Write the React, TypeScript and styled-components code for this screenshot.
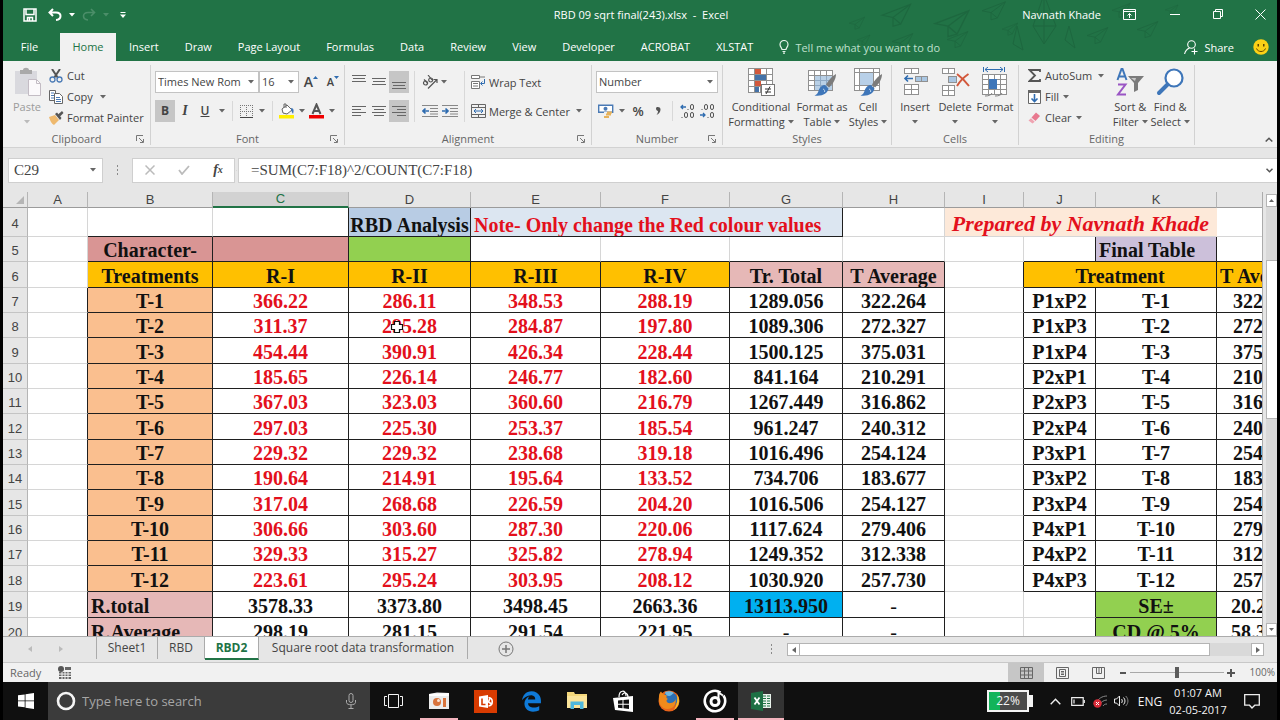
import React from 'react';
import styled, { createGlobalStyle, css } from 'styled-components';
import { FaEdgeLegacy } from 'react-icons/fa';

const UI = '"Open Sans", "Noto Sans", sans-serif';
const GREEN = '#217346';
const LINE = '#1f1f1f';
const SOFT = '#d6d6d6';

const Global = createGlobalStyle`
  * { box-sizing: border-box; }
  html, body { margin: 0; background: #000; }
  button, input, select { font: inherit; color: inherit; margin: 0; }
  button { border: 0; padding: 0; background: none; }
  svg { display: block; flex: none; }
`;

/* ---------- frame ---------- */
const Window = styled.div`
  display: flex;
  flex-direction: column;
  height: 100vh;
  padding: 0 3px;
  overflow: hidden;
  font-family: ${UI};
  font-size: 12px;
  line-height: 15px;
  color: #444;
`;

const Header = styled.header`
  position: relative;
  flex: none;
  background: ${GREEN};
  color: #fff;
`;

const Doodles = styled.svg`
  position: absolute;
  top: 0;
  right: 80px;
`;

const TitleBar = styled.div`
  position: relative;
  display: grid;
  grid-template-columns: 1fr auto 1fr;
  align-items: center;
  height: 33px;
  padding: 0 0 4px 2px;
  font-size: 11px;
`;

const QuickAccess = styled.div`
  display: flex;
  align-items: center;
  padding-left: 14px;
`;

const WindowControls = styled.div`
  display: flex;
  align-items: center;
  justify-content: flex-end;
  white-space: nowrap;
`;

const Tool = styled.button<{ $w?: number; $on?: boolean; $h?: number }>`
  display: flex;
  flex: none;
  align-items: center;
  justify-content: center;
  width: ${(p) => p.$w ?? 20}px;
  height: ${(p) => p.$h ?? 22}px;
  background: ${(p) => (p.$on ? '#c6c6c6' : 'transparent')};
`;

const TabBar = styled.nav`
  position: relative;
  display: flex;
  height: 28px;
  align-items: stretch;
  font-size: 11px;
`;

const Tab = styled.button<{ $active?: boolean; $first?: boolean }>`
  padding: 0 13px;
  white-space: nowrap;
  line-height: 28px;
  ${(p) => p.$first && css`width: 57px; padding: 0 4px 0 0;`}
  ${(p) => p.$active && css`background: #f1f1f1; color: ${GREEN}; width: 56px; padding: 0;`}
`;

const TellMe = styled.label`
  display: flex;
  align-items: center;
  gap: 6px;
  flex: 1;
  min-width: 0;
  padding-left: 13px;
  input {
    width: 200px;
    border: 0;
    padding: 0;
    outline: 0;
    background: transparent;
    font-size: 11px;
    &::placeholder { color: #bfe0cd; opacity: 1; }
  }
`;

const Share = styled.button`
  display: flex;
  align-items: center;
  gap: 6px;
  margin-right: 11px;
`;

/* ---------- ribbon ---------- */
const Ribbon = styled.section`
  display: flex;
  flex: none;
  padding: 4px 0 2px;
  height: 87px;
  background: #f1f1f1;
  border-bottom: 1px solid #d2d2d2;
  font-size: 11px;
`;

const GroupBox = styled.div<{ $w: number }>`
  display: flex;
  flex-direction: column;
  flex: none;
  width: ${(p) => p.$w}px;
  border-right: 1px solid #d2d2d2;
`;

const GroupBody = styled.div<{ $pad: number; $drop?: boolean }>`
  display: flex;
  flex: 1;
  align-items: flex-start;
  padding: ${(p) => (p.$drop ? 6 : 0)}px 0 0 ${(p) => p.$pad}px;
`;

const GroupFoot = styled.div`
  display: grid;
  grid-template-columns: 14px 1fr 14px;
  align-items: center;
  height: 12px;
  line-height: 12px;
  color: #666;
  text-align: center;
  & > span { grid-column: 2; }
`;

const RibbonEnd = styled.div`
  display: flex;
  flex: 1;
  align-items: flex-end;
  justify-content: flex-end;
`;

const Stack = styled.div<{ $gap?: number }>`
  display: flex;
  flex-direction: column;
  gap: ${(p) => p.$gap ?? 0}px;
`;

const Line = styled.div`
  display: flex;
  align-items: center;
`;

const Rule = styled.div<{ $m: number; $h?: number }>`
  flex: none;
  width: 1px;
  height: ${(p) => p.$h ?? 20}px;
  margin: 0 ${(p) => p.$m}px;
  background: #d8d8d8;
`;

const SmallButton = styled.button<{ $h?: number }>`
  display: flex;
  align-items: center;
  height: ${(p) => p.$h ?? 21}px;
  white-space: nowrap;
  & > i { display: flex; justify-content: center; width: 18px; margin-right: 2px; }
  & > span { padding-right: 4px; }
`;

const CaretBox = styled.span<{ $w: number }>`
  display: flex;
  flex: none;
  justify-content: center;
  width: ${(p) => p.$w}px;
`;

const BigButton = styled.button<{ $w: number; $faded?: boolean }>`
  display: flex;
  flex-direction: column;
  align-items: center;
  width: ${(p) => p.$w}px;
  padding-top: 2px;
  line-height: 15px;
  white-space: nowrap;
  color: ${(p) => (p.$faded ? '#9b9b9b' : 'inherit')};
  & > svg { margin-bottom: 2px; }
  & > span { display: flex; align-items: center; gap: 3px; height: 15px; }
`;

const Combo = styled.label<{ $w: number }>`
  display: grid;
  width: ${(p) => p.$w}px;
  height: 22px;
  align-items: center;
  border: 1px solid #c3c3c3;
  background: #fff;
  & > * { grid-area: 1 / 1; }
  select {
    appearance: none;
    width: 100%;
    height: 20px;
    padding: 0 17px 0 2px;
    border: 0;
    outline: 0;
    background: transparent;
    line-height: 20px;
    text-overflow: clip;
  }
  svg { justify-self: end; margin-right: 4px; pointer-events: none; }
`;

const Letter = styled.span<{ $size?: number; $kind?: 'b' | 'i' | 'u' }>`
  font-size: ${(p) => p.$size ?? 13}px;
  line-height: 16px;
  font-weight: ${(p) => (p.$kind === 'i' ? 400 : 600)};
  ${(p) => p.$kind === 'b' && css`font-weight: 700;`}
  ${(p) => p.$kind === 'i' && css`font-family: "Liberation Serif", serif; font-weight: 700; font-style: italic;`}
  ${(p) => p.$kind === 'u' && css`text-decoration: underline;`}
`;

/* ---------- formula bar ---------- */
const FormulaBar = styled.section`
  display: flex;
  flex: none;
  height: 44px;
  align-items: center;
  padding-left: 5px;
  background: #e6e6e6;
`;

const Field = styled.div<{ $w?: number; $grow?: boolean }>`
  display: flex;
  align-items: center;
  flex: ${(p) => (p.$grow ? '1' : 'none')};
  min-width: 0;
  width: ${(p) => (p.$w ? `${p.$w}px` : 'auto')};
  height: 25px;
  padding: 0 6px 0 5px;
  border: 1px solid #cfcfcf;
  ${(p) => p.$grow && css`border-right: 0; padding: 0 4px 0 12px;`}
  background: #fff;
  input {
    flex: 1;
    min-width: 0;
    border: 0;
    padding: 0;
    outline: 0;
    background: transparent;
    font-family: "Liberation Serif", serif;
    font-size: 15px;
    line-height: 20px;
    color: #444;
  }
`;

const Dots = styled.div<{ $m: number }>`
  flex: none;
  width: 1px;
  height: 11px;
  margin: 0 ${(p) => p.$m}px;
  background: repeating-linear-gradient(#8a8a8a 0 2px, transparent 2px 4px);
`;

/* ---------- sheet ---------- */
const SheetArea = styled.main`
  display: flex;
  flex: 1 1 0;
  min-height: 0;
  background: #e6e6e6;
  border-bottom: 1px solid #ababab;
`;

const Viewport = styled.div`
  flex: 1;
  min-width: 0;
  overflow: hidden;
  border-right: 1px solid #ababab;
`;

const Grid = styled.table`
  width: 1312px;
  table-layout: fixed;
  border-collapse: separate;
  border-spacing: 0;
  background: #fff;
`;

const ColHead = styled.th<{ $active?: boolean }>`
  height: 16px;
  padding: 0;
  border-right: 1px solid #b5b5b5;
  border-bottom: 1px solid #9b9b9b;
  background: #e6e6e6;
  font: 13px/15px "Liberation Sans", sans-serif;
  ${(p) => p.$active && css`background: #d2d2d2; color: ${GREEN}; border-bottom: 2px solid ${GREEN}; line-height: 14px;`}
  & > svg { margin-left: auto; margin-right: 3px; }
`;

const RowHead = styled.th`
  padding: 4px 0 0;
  border-right: 1px solid #b5b5b5;
  border-bottom: 1px solid #c4c4c4;
  background: #e6e6e6;
  font: 13px/18px "Liberation Sans", sans-serif;
`;

const Cell = styled.td<{
  $bg?: string; $red?: boolean; $left?: boolean; $r?: boolean; $b?: boolean; $script?: boolean; $thin?: boolean; $indent?: number;
}>`
  position: relative;
  padding: 0 0 0 ${(p) => p.$indent ?? (p.$left ? 3 : 0)}px;
  overflow: hidden;
  white-space: nowrap;
  vertical-align: bottom;
  border-right: 1px solid ${(p) => (p.$r ? LINE : p.$bg ?? SOFT)};
  border-bottom: 1px solid ${(p) => (p.$b ? LINE : SOFT)};
  background: ${(p) => p.$bg ?? '#fff'};
  color: ${(p) => (p.$red ? '#e3101c' : '#111')};
  text-align: ${(p) => (p.$left ? 'left' : 'center')};
  font: bold 20px/22px "Liberation Serif", serif;
  ${(p) => p.$script && css`font-size: 22px; line-height: 24px; font-style: italic;`}
  ${(p) => p.$thin && css`font-weight: 400;`}
`;

const Row = styled.tr<{ $h: number }>`
  height: ${(p) => p.$h}px;
`;

const Pointer = styled.svg`
  position: absolute;
  left: 41px;
  top: 7px;
`;

const VScroll = styled.div`
  display: flex;
  flex-direction: column;
  width: 14px;
  padding: 2px 0 0 3px;
  & > button { width: 11px; }
`;

const ScrollButton = styled.button`
  display: flex;
  flex: none;
  align-items: center;
  justify-content: center;
  width: 13px;
  height: 13px;
  border: 1px solid #b4b4b4;
  background: #fff;
`;

const VTrack = styled.div`
  flex: 1;
  padding-top: 53px;
  background: #d9d9d9;
  & > div { height: 159px; border: 1px solid #b4b4b4; border-right: 0; background: #fff; }
`;

/* ---------- sheet tabs and status ---------- */
const SheetTabs = styled.nav`
  display: flex;
  flex: none;
  height: 26px;
  align-items: flex-start;
  background: #e6e6e6;
  border-bottom: 1px solid #c8c8c8;
`;

const SheetTab = styled.button<{ $w: number; $active?: boolean }>`
  width: ${(p) => p.$w}px;
  height: 22px;
  border-right: 1px solid #ababab;
  white-space: nowrap;
  line-height: 22px;
  ${(p) => p.$active && css`
    height: 23px;
    background: #fff;
    color: ${GREEN};
    font-weight: 700;
    border-bottom: 2px solid ${GREEN};
  `}
`;

const Push = styled.div`
  flex: 1;
`;

const HScroll = styled.div`
  display: flex;
  align-items: center;
  width: 477px;
  margin: 6px 13px 0 0;
`;

const HTrack = styled.div`
  flex: 1;
  height: 13px;
  background: #d9d9d9;
  & > div { width: 91%; height: 13px; border: 1px solid #b4b4b4; border-left: 0; background: #fff; }
`;

const Status = styled.footer`
  display: flex;
  flex: none;
  height: 19px;
  align-items: center;
  padding-left: 7px;
  background: #f1f1f1;
  color: #666;
  font-size: 11px;
`;

const Zoom = styled.input`
  appearance: none;
  width: 94px;
  height: 12px;
  background: linear-gradient(#a8a8a8, #a8a8a8) center / 100% 1px no-repeat;
  &::-webkit-slider-thumb { appearance: none; width: 4px; height: 11px; background: #5c5c5c; }
`;

const ZoomValue = styled.span`
  width: 39px;
  padding-right: 2px;
  text-align: right;
  font-size: 10px;
`;

/* ---------- taskbar ---------- */
const Taskbar = styled.footer`
  display: flex;
  flex: none;
  height: 38px;
  align-items: stretch;
  background: #101010;
  color: #f4f4f4;
`;

const Search = styled.label`
  display: flex;
  align-items: center;
  gap: 6px;
  flex: 0 1 322px;
  padding: 0 14px 0 8px;
  background: #3b3b3b;
  input {
    flex: 1;
    min-width: 0;
    border: 0;
    padding: 0;
    outline: 0;
    background: transparent;
    font-size: 13px;
    &::placeholder { color: #a6a6a6; opacity: 1; }
  }
`;

const App46 = styled.button<{ $state?: 'open' | 'active' }>`
  display: flex;
  position: relative;
  align-items: center;
  justify-content: center;
  width: 46px;
  background: ${(p) => (p.$state === 'active' ? '#333' : 'transparent')};
  &::after {
    content: '';
    position: absolute;
    bottom: 0;
    width: ${(p) => (p.$state === 'active' ? 46 : 38)}px;
    height: 2px;
    background: ${(p) => (p.$state ? '#f3b3bd' : 'transparent')};
  }
`;

const Tray = styled.div`
  display: flex;
  align-items: center;
  margin-left: auto;
`;

const Battery = styled.div`
  display: flex;
  align-items: center;
  margin-right: 10px;
  & > b {
    width: 42px;
    height: 22px;
    border: 2px solid #f4f4f4;
    background: linear-gradient(90deg, #12b45a 11px, #4b4b4b 11px);
    font-size: 12px;
    font-weight: 400;
    line-height: 18px;
    text-align: center;
  }
  & > i { width: 4px; height: 12px; background: #f4f4f4; }
`;

const Clock = styled.time`
  width: 58px;
  text-align: center;
  font-size: 11px;
  line-height: 17px;
`;

/* ---------- icons ---------- */
const Caret = ({ color = '#666' }: { color?: string }) => (
  <svg width="6" height="4" viewBox="0 0 6 4"><path d="M0 0h6L3 3.5z" fill={color} /></svg>
);
const Launcher = () => (
  <svg width="8" height="8" viewBox="0 0 8 8" fill="none" stroke="#777"><path d="M.5 6V.5H7M3 3l4 4M7.500 4v3.500H4" /></svg>
);
const Bars = ({ y, x = [0, 0, 0], w = [14, 14, 14] }: { y: number[]; x?: number[]; w?: number[] }) => (
  <svg width="14" height="16" viewBox="0 0 14 16">
    {y.map((v, i) => {
      const k = y.length === 4 ? i % 2 : i % 3;
      return <rect key={v} x={x[k]} y={v} width={w[k]} height="1" fill="#666" />;
    })}
  </svg>
);
const GridIcon = ({ x, y, c, r, s = 6, h = 5, fill = '#fff' }: { x: number; y: number; c: number; r: number; s?: number; h?: number; fill?: string }) => (
  <g fill={fill} stroke="#909090">
    {Array.from({ length: c * r }, (_, i) => (
      <rect key={i} x={x + (i % c) * s + 0.5} y={y + Math.floor(i / c) * h + 0.5} width={s} height={h} />
    ))}
  </g>
);
const Brush = () => (
  <g>
    <path d="M29 7c-4 2-8 7-10 10.500l3 3C26 17 29 12 29 7z" fill="#7b7b7b" />
    <path d="M18 18l3.500 3.500c-1 5-6 8-14 7 3-1 3.500-3 4.500-6 1-2.500 3.500-4.500 6-4.500z" fill="#3e76b9" />
    <path d="M16 22c1.500.500 2 1.500 1.500 3" stroke="#bcd4ec" fill="none" />
  </g>
);

const ConditionalIcon = () => (
  <svg width="30" height="30" viewBox="0 0 30 30">
    <GridIcon x={2} y={1} c={4} r={4} s={6} h={6} />
    <path d="M9 2h6v5H9zM9 14h6v5H9z" fill="#d2583b" />
    <path d="M9 8h11v5H9zM9 20h4v5H9z" fill="#4472a8" />
    <rect x="15.500" y="17.500" width="13" height="11" fill="#fff" stroke="#777" />
    <path d="M19 22h6M19 25h6M24 19.500l-4 7.500" stroke="#333" fill="none" />
  </svg>
);
const TableIcon = () => (
  <svg width="30" height="30" viewBox="0 0 30 30">
    <GridIcon x={1} y={3} c={4} r={4} s={6} h={5} />
    <path d="M8 9h17v14H8z" fill="#a8c4e0" opacity=".8" />
    <path d="M13.500 9v14M19.500 9v14M8 13.500h17M8 18.500h17" stroke="#8fa9c4" />
    <Brush />
  </svg>
);
const StylesIcon = () => (
  <svg width="30" height="30" viewBox="0 0 30 30">
    <GridIcon x={1} y={1} c={1} r={1} s={25} h={22} />
    <path d="M6.500 1v22M1 5.500h25M1 18.500h25M20.500 1v22" stroke="#909090" />
    <path d="M7 6h13v12H7z" fill="#b8d0e8" />
    <Brush />
  </svg>
);
const InsertIcon = () => (
  <svg width="30" height="30" viewBox="0 0 30 30">
    <GridIcon x={4} y={1} c={2} r={1} s={7} h={5} />
    <GridIcon x={4} y={17} c={2} r={2} s={7} h={5} />
    <GridIcon x={15} y={9} c={2} r={1} s={6} h={5} fill="#a9c6e2" />
    <path d="M13 11.500H5M8 8.500l-3 3 3 3" stroke="#2f6cb0" strokeWidth="1.600" fill="none" />
  </svg>
);
const DeleteIcon = () => (
  <svg width="30" height="30" viewBox="0 0 30 30">
    <GridIcon x={2} y={1} c={2} r={1} s={6} h={5} />
    <GridIcon x={2} y={18} c={2} r={2} s={6} h={5} />
    <GridIcon x={8} y={9} c={1} r={1} s={8} h={6} fill="#a9c6e2" />
    <path d="M17 7c4 3 8 7 12 12M28.500 7C24 10 20 14 17 19" stroke="#d2583b" strokeWidth="2" fill="none" />
  </svg>
);
const FormatIcon = () => (
  <svg width="30" height="30" viewBox="0 0 30 30">
    <path d="M3.500 0v5M24.500 0v5M5 2.500h18M8 0L5 2.500 8 5M20 0l3 2.500L20 5" stroke="#2f6cb0" fill="none" />
    <GridIcon x={2} y={7} c={4} r={4} s={6} h={5} />
    <path d="M9 12h8v10H9z" fill="#3e76b9" />
    <path d="M5 29c4 0 6-1 7-3M15 29c4 0 6-1 7-3" stroke="#808080" fill="none" />
  </svg>
);
const SortIcon = () => (
  <svg width="30" height="30" viewBox="0 0 30 30">
    <path d="M2.500 13L6.500 2h1l4 11M4 9.500h6" stroke="#3e76b9" strokeWidth="2" fill="none" />
    <path d="M3 17.500h7.500L3 27.500h8" stroke="#9a55c4" strokeWidth="2" fill="none" />
    <path d="M13 9h16l-6 7v7l-4 2v-9z" fill="#7b7b7b" />
    <path d="M16 11h5l-1 3z" fill="#c9c9c9" />
  </svg>
);
const FindIcon = () => (
  <svg width="30" height="30" viewBox="0 0 30 30" fill="none" stroke="#3e76b9">
    <circle cx="19" cy="11" r="8.500" strokeWidth="2.200" fill="#fff" />
    <path d="M12.500 17.500L4 26" strokeWidth="4" strokeLinecap="round" />
  </svg>
);
const PasteIcon = () => (
  <svg width="30" height="30" viewBox="0 0 30 30">
    <path d="M3 4h22v23H3z" fill="#d9d9de" />
    <path d="M8 3h3c0-3 6-3 6 0h3v4H8z" fill="#a9a9a9" />
    <path d="M16.500 12.500h8l4 4v12h-12z" fill="#fbf9fb" stroke="#c3bcc4" />
    <path d="M24.500 12.500v4h4" fill="none" stroke="#c3bcc4" />
  </svg>
);
const CutIcon = () => (
  <svg width="14" height="14" viewBox="0 0 14 14" fill="none">
    <path d="M3 0l6 9M11 0L5 9" stroke="#555" strokeWidth="2" />
    <circle cx="3.500" cy="10.500" r="2.500" stroke="#4a7ab5" strokeWidth="1.300" /><circle cx="10.500" cy="10.500" r="2.500" stroke="#4a7ab5" strokeWidth="1.300" />
  </svg>
);
const CopyIcon = () => (
  <svg width="14" height="14" viewBox="0 0 14 14" fill="#fff" stroke="#666">
    <path d="M.500.500h6v10h-6z" /><path d="M2 3h3M2 5.500h3M2 8h3" stroke="#4a7ab5" />
    <path d="M5.500 3.500h5l3 3v7h-8z" /><path d="M7 7.500h4M7 9.500h5M7 11.500h5" stroke="#4a7ab5" />
  </svg>
);
const PainterIcon = () => (
  <svg width="15" height="14" viewBox="0 0 15 14">
    <path d="M0 6l6-2 4 5-5 5C3 13 1 10 0 6z" fill="#eeb96e" />
    <path d="M6 3l2-1.500L12.500 7 11 9z" fill="#555" /><path d="M9 3.500L13 0l1.500 2L11 5.500z" fill="#555" />
  </svg>
);

const Logo = () => (
  <svg width="16" height="16" viewBox="0 0 16 16" fill="#fff"><path d="M0 2.300l6.700-.9v6H0zM7.500 1.300L16 0v7.400H7.500zM0 8.300h6.700v6L0 13.500zM7.500 8.300H16V16l-8.500-1.300z" /></svg>
);
const paperPlane = 'M0 12L26 2l-9 18-7-6zM26 2L10 14M10 14v8l7-2';

/* ---------- sheet data ---------- */
const columns: [string, number][] = [
  ['A', 60], ['B', 125], ['C', 136], ['D', 122], ['E', 130], ['F', 129], ['G', 113], ['H', 102],
  ['I', 79], ['J', 72], ['K', 121], ['L', 98],
];
const treatments: string[][] = [
  ['366.22', '286.11', '348.53', '288.19', '1289.056', '322.264', 'P1xP2'],
  ['311.37', '295.28', '284.87', '197.80', '1089.306', '272.327', 'P1xP3'],
  ['454.44', '390.91', '426.34', '228.44', '1500.125', '375.031', 'P1xP4'],
  ['185.65', '226.14', '246.77', '182.60', '841.164', '210.291', 'P2xP1'],
  ['367.03', '323.03', '360.60', '216.79', '1267.449', '316.862', 'P2xP3'],
  ['297.03', '225.30', '253.37', '185.54', '961.247', '240.312', 'P2xP4'],
  ['229.32', '229.32', '238.68', '319.18', '1016.496', '254.124', 'P3xP1'],
  ['190.64', '214.91', '195.64', '133.52', '734.706', '183.677', 'P3xP2'],
  ['317.04', '268.68', '226.59', '204.20', '1016.506', '254.127', 'P3xP4'],
  ['306.66', '303.60', '287.30', '220.06', '1117.624', '279.406', 'P4xP1'],
  ['329.33', '315.27', '325.82', '278.94', '1249.352', '312.338', 'P4xP2'],
  ['223.61', '295.24', '303.95', '208.12', '1030.920', '257.730', 'P4xP3'],
];
const summaries = [
  { n: 19, name: 'R.total', v: ['3578.33', '3373.80', '3498.45', '2663.36'], total: '13113.950', key: 'SE±', out: '20.2' },
  { n: 20, name: 'R.Average', v: ['298.19', '281.15', '291.54', '221.95'], total: '-', key: 'CD @ 5%', out: '58.3' },
];
const gold = '#ffc000';
const rose = '#e6b8b7';

function Group({ w, pad, label, drop, launcher, children }: {
  w: number; pad: number; label: string; drop?: boolean; launcher?: boolean; children: React.ReactNode;
}) {
  return (
    <GroupBox $w={w}>
      <GroupBody $pad={pad} $drop={drop}>{children}</GroupBody>
      <GroupFoot><span>{label}</span>{launcher && <button aria-label={`${label} settings`}><Launcher /></button>}</GroupFoot>
    </GroupBox>
  );
}

function Big({ w, icon, a, b, faded }: { w: number; icon: React.ReactNode; a: string; b?: string; faded?: boolean }) {
  return (
    <BigButton $w={w} $faded={faded}>
      {icon}
      <span>{a}</span>
      <span>{b}<Caret color={faded ? '#bbb' : '#666'} /></span>
    </BigButton>
  );
}

function RibbonBar() {
  return (
    <Ribbon>
      <Group w={148} pad={4} label="Clipboard" launcher>
        <Big w={40} icon={<PasteIcon />} a="Paste" faded />
        <Stack>
          <SmallButton><i><CutIcon /></i><span>Cut</span></SmallButton>
          <SmallButton><i><CopyIcon /></i><span>Copy</span><CaretBox $w={16}><Caret /></CaretBox></SmallButton>
          <SmallButton><i><PainterIcon /></i><span>Format Painter</span></SmallButton>
        </Stack>
      </Group>

      <Group w={194} pad={4} label="Font" drop launcher>
        <Stack $gap={7}>
          <Line>
            <Combo $w={104}><select aria-label="Font"><option>Times New Roman</option></select><Caret /></Combo>
            <Combo $w={40}><select aria-label="Font size"><option>16</option></select><Caret /></Combo>
            <Tool $w={24}><Letter $size={14}>A</Letter><svg width="5" height="12" viewBox="0 0 5 12"><path d="M0 3l2.500-3L5 3z" fill="#2f6cb0" /></svg></Tool>
            <Tool $w={20}><Letter $size={11}>A</Letter><svg width="5" height="12" viewBox="0 0 5 12"><path d="M0 0l2.500 3L5 0z" fill="#2f6cb0" /></svg></Tool>
          </Line>
          <Line>
            <Tool $on><Letter $size={12} $kind="b">B</Letter></Tool>
            <Tool><Letter $size={14} $kind="i">I</Letter></Tool>
            <Tool><Letter $size={12} $kind="u">U</Letter></Tool>
            <CaretBox $w={14}><Caret /></CaretBox>
            <Rule $m={3} />
            <Tool $w={20} aria-label="Borders">
              <svg width="13" height="13" viewBox="0 0 13 13" fill="none" stroke="#777"><path d="M.5 0v12M6.500 0v12M12.500 0v12M0 .5h13M0 6.500h13" strokeDasharray="1 1" /><path d="M0 12.500h13" stroke="#444" /></svg>
            </Tool>
            <CaretBox $w={12}><Caret /></CaretBox>
            <Rule $m={4} />
            <Tool $w={20} aria-label="Fill colour">
              <svg width="16" height="16" viewBox="0 0 16 16"><path d="M3 6l5-4 5 5-5 4-4-1z" fill="#fff" stroke="#666" /><path d="M5 5V1h2v4" fill="none" stroke="#666" /><path d="M12 5c3 0 3 3 2 6-1-2-2-3-2-6z" fill="#3e76b9" /><path d="M0 12h15v3.500H0z" fill="#ffef00" /></svg>
            </Tool>
            <CaretBox $w={10}><Caret /></CaretBox>
            <Tool $w={20} aria-label="Font colour">
              <svg width="16" height="16" viewBox="0 0 16 16"><path d="M3.500 11L7.500 1.500 11.500 11M5 8h5" fill="none" stroke="#555" strokeWidth="2" /><path d="M0 12h15v3.500H0z" fill="#f00000" /></svg>
            </Tool>
            <CaretBox $w={10}><Caret /></CaretBox>
          </Line>
        </Stack>
      </Group>

      <Group w={247} pad={4} label="Alignment" drop launcher>
        <Stack $gap={7}>
          <Line>
            <Tool aria-label="Top align"><Bars y={[1, 4, 7]} x={[0, 1, 0]} w={[14, 12, 14]} /></Tool>
            <Tool aria-label="Middle align"><Bars y={[4, 7, 10]} x={[0, 1, 0]} w={[14, 12, 14]} /></Tool>
            <Tool $on aria-label="Bottom align"><Bars y={[8, 11, 14]} x={[0, 1, 0]} w={[14, 12, 14]} /></Tool>
          </Line>
          <Line>
            <Tool aria-label="Align left"><Bars y={[3, 6, 9, 12]} w={[14, 9]} /></Tool>
            <Tool aria-label="Center"><Bars y={[3, 6, 9, 12]} x={[0, 2]} w={[14, 10]} /></Tool>
            <Tool $on aria-label="Align right"><Bars y={[3, 6, 9, 12]} x={[0, 5]} w={[14, 9]} /></Tool>
          </Line>
        </Stack>
        <Rule $m={5} $h={51} />
        <Stack $gap={7}>
          <Line>
            <Tool $w={20} aria-label="Orientation">
              <svg width="16" height="14" viewBox="0 0 16 14" fill="none" stroke="#555" strokeWidth="1.200"><circle cx="3.500" cy="8" r="2" /><path d="M2 4.500l4 4M6 0l4 5" /><circle cx="8.700" cy="5" r="2" /><path d="M6 13.500L14.500 5M11.500 4.500H15V8" /></svg>
            </Tool>
            <CaretBox $w={8}><Caret /></CaretBox>
          </Line>
          <Line>
            <Tool aria-label="Decrease indent"><svg width="16" height="12" viewBox="0 0 16 12"><path d="M0 .5h16M8 3.500h8M8 6.500h8M0 11.500h16M8 9h8" stroke="#888" /><path d="M7 6H1M3.500 3.500L1 6l2.500 2.500" stroke="#2f6cb0" strokeWidth="1.700" fill="none" /></svg></Tool>
            <Tool aria-label="Increase indent"><svg width="16" height="12" viewBox="0 0 16 12"><path d="M0 .5h16M8 3.500h8M8 6.500h8M0 11.500h16M8 9h8" stroke="#888" /><path d="M0 6h6M3.500 3.500L6 6 3.500 8.500" stroke="#2f6cb0" strokeWidth="1.700" fill="none" /></svg></Tool>
          </Line>
        </Stack>
        <Rule $m={4} $h={51} />
        <Stack $gap={7}>
          <SmallButton $h={22}>
            <i><svg width="15" height="14" viewBox="0 0 15 14" fill="#fff" stroke="#777"><path d="M.5.500h8v3h-8zM.5 6.500h8v7h-8z" /><path d="M2 8.500h5M2 11h5M8.500 2H14" /><path d="M13.500 4v4.500H10M11.500 6.500l-2 2 2 2" stroke="#2f6cb0" fill="none" /></svg></i>
            <span>Wrap Text</span>
          </SmallButton>
          <SmallButton $h={22}>
            <i><svg width="15" height="14" viewBox="0 0 15 14" fill="none" stroke="#666"><path d="M.5.500h14v13H.500zM0 3.500h15M0 10.500h15M7.500 0v3M7.500 11v3" /><path d="M3 7h9M5 5L3 7l2 2M10 5l2 2-2 2" stroke="#2f6cb0" /></svg></i>
            <span>Merge &amp; Center</span>
            <CaretBox $w={14}><Caret /></CaretBox>
          </SmallButton>
        </Stack>
      </Group>

      <Group w={131} pad={4} label="Number" drop launcher>
        <Stack $gap={7}>
          <Combo $w={122}><select aria-label="Number format"><option>Number</option></select><Caret /></Combo>
          <Line>
            <Tool aria-label="Accounting format">
              <svg width="16" height="15" viewBox="0 0 16 15"><path d="M.700 1.200h14v7h-14z" fill="#fff" stroke="#4a7ab5" strokeWidth="1.400" /><circle cx="7.500" cy="4.700" r="2" fill="#4a7ab5" /><path d="M6 8h8v6H6z" fill="#f1f1f1" /><path d="M9 8.500h5M8 10.500h5M6 13h5" stroke="#e6b25c" strokeWidth="2" /></svg>
            </Tool>
            <CaretBox $w={12}><Caret /></CaretBox>
            <Tool><Letter $size={13}>%</Letter></Tool>
            <Tool aria-label="Comma style"><svg width="5" height="8" viewBox="0 0 5 8"><path d="M0 1.500C0-.5 4.500-.500 4.500 2.500 4.500 5 3 7 .5 8 1.500 6.500 2 5.500 2 4 1 4 0 3 0 1.500z" fill="#555" /></svg></Tool>
            <Rule $m={4} />
            <Tool aria-label="Increase decimal">
              <svg width="15" height="14" viewBox="0 0 15 14" fill="none" stroke="#555"><path d="M6 3H1M3 1L1 3l2 2" stroke="#2f6cb0" strokeWidth="1.300" /><rect x="10.500" y=".5" width="3" height="5" rx="1.500" /><rect x="4.500" y="8.500" width="3" height="5" rx="1.500" /><rect x="10.500" y="8.500" width="3" height="5" rx="1.500" /><path d="M8 5v1M2 13v1" /></svg>
            </Tool>
            <Tool aria-label="Decrease decimal">
              <svg width="15" height="14" viewBox="0 0 15 14" fill="none" stroke="#555"><rect x="4.500" y=".5" width="3" height="5" rx="1.500" /><rect x="10.500" y=".5" width="3" height="5" rx="1.500" /><path d="M2 5v1M8 13v1" /><path d="M0 11h5M3 9l2 2-2 2" stroke="#2f6cb0" strokeWidth="1.300" /><rect x="10.500" y="8.500" width="3" height="5" rx="1.500" /></svg>
            </Tool>
          </Line>
        </Stack>
      </Group>

      <Group w={169} pad={2} label="Styles">
        <Big w={72} icon={<ConditionalIcon />} a="Conditional" b="Formatting" />
        <Big w={50} icon={<TableIcon />} a="Format as" b="Table" />
        <Big w={42} icon={<StylesIcon />} a="Cell" b="Styles" />
      </Group>
      <Group w={127} pad={3} label="Cells">
        <Big w={40} icon={<InsertIcon />} a="Insert" />
        <Big w={40} icon={<DeleteIcon />} a="Delete" />
        <Big w={40} icon={<FormatIcon />} a="Format" />
      </Group>
      <Group w={176} pad={6} label="Editing">
        <Stack>
          <SmallButton>
            <i><svg width="13" height="13" viewBox="0 0 13 13"><path d="M12 3V1H1.500L7 6.500 1.500 12H12v-2" stroke="#555" strokeWidth="1.800" fill="none" /></svg></i>
            <span>AutoSum</span><CaretBox $w={14}><Caret /></CaretBox>
          </SmallButton>
          <SmallButton>
            <i><svg width="13" height="14" viewBox="0 0 13 14"><path d="M.5.500h12v13H.500z" fill="#fff" stroke="#666" /><path d="M0 0h13v3H0z" fill="#666" /><path d="M6.500 4v8M3.500 8.500l3 3 3-3" stroke="#2f6cb0" strokeWidth="1.600" fill="none" /></svg></i>
            <span>Fill</span><Caret />
          </SmallButton>
          <SmallButton>
            <i><svg width="13" height="13" viewBox="0 0 13 13"><path d="M8 1.500L12 5 7.500 10 3.500 6.500z" fill="#e8798f" /><path d="M3 7.200L6.700 10.700 4.500 12.500.500 9.500z" fill="#efa3b1" /></svg></i>
            <span>Clear</span><Caret />
          </SmallButton>
        </Stack>
        <Big w={40} icon={<SortIcon />} a="Sort &amp;" b="Filter" />
        <Big w={40} icon={<FindIcon />} a="Find &amp;" b="Select" />
      </Group>
      <RibbonEnd>
        <Tool $w={16} $h={12} aria-label="Collapse ribbon"><svg width="8" height="5" viewBox="0 0 8 5"><path d="M.700 4.500L4 1.200l3.300 3.300" stroke="#555" strokeWidth="1.500" fill="none" /></svg></Tool>
      </RibbonEnd>
    </Ribbon>
  );
}

function Sheet() {
  return (
    <Grid>
      <colgroup>
        <col width={25} />
        {columns.map(([c, w]) => <col key={c} width={w} />)}
      </colgroup>
      <thead>
        <tr>
          <ColHead><svg width="8" height="8" viewBox="0 0 8 8"><path d="M8 0v8H0z" fill="#b5b5b5" /></svg></ColHead>
          {columns.map(([c]) => <ColHead key={c} $active={c === 'C'}>{c}</ColHead>)}
        </tr>
      </thead>
      <tbody>
        <Row $h={29}>
          <RowHead>4</RowHead>
          <Cell /><Cell $b /><Cell $r $b />
          <Cell $bg="#b8cce4" $r $b>RBD Analysis</Cell>
          <Cell $bg="#dce6f1" $red $left $r $b colSpan={3}>Note- Only change the Red colour values</Cell>
          <Cell />
          <Cell $bg="#fde9d9" $red $script colSpan={3}>Prepared by Navnath Khade</Cell>
          <Cell />
        </Row>
        <Row $h={25}>
          <RowHead>5</RowHead>
          <Cell />
          <Cell $bg="#d99594" $r $b>Character-</Cell>
          <Cell $bg="#d99594" $r $b />
          <Cell $bg="#92d050" $r $b />
          <Cell $b /><Cell $b /><Cell $b /><Cell $b /><Cell /><Cell $r $b />
          <Cell $bg="#ccc0da" $left $r $b>Final Table</Cell>
          <Cell $b />
        </Row>
        <Row $h={26}>
          <RowHead>6</RowHead>
          <Cell />
          {['Treatments', 'R-I', 'R-II', 'R-III', 'R-IV'].map((t) => <Cell key={t} $bg={gold} $r $b>{t}</Cell>)}
          <Cell $bg={rose} $r $b>Tr. Total</Cell>
          <Cell $bg={rose} $r $b>T Average</Cell>
          <Cell $r />
          <Cell $bg={gold} $r $b colSpan={2}>Treatment</Cell>
          <Cell $bg={gold} $left $r $b>T Average</Cell>
        </Row>
        {treatments.map((row, i) => (
          <Row key={row[6]} $h={i % 3 === 2 ? 26 : 25}>
            <RowHead>{i + 7}</RowHead>
            <Cell $r />
            <Cell $bg="#fabf8f" $r $b>T-{i + 1}</Cell>
            {row.slice(0, 4).map((v, j) => (
              <Cell key={j} $red $r $b>
                {v}
                {i === 1 && j === 1 && (
                  <Pointer width="14" height="14" viewBox="0 0 14 14">
                    <path d="M4.500 1.500h5v3h3v5h-3v3h-5v-3h-3v-5h3z" fill="#fff" stroke="#111" strokeWidth="1.200" />
                  </Pointer>
                )}
              </Cell>
            ))}
            <Cell $r $b>{row[4]}</Cell>
            <Cell $r $b>{row[5]}</Cell>
            <Cell $r />
            <Cell $r $b>{row[6]}</Cell>
            <Cell $r $b>T-{i + 1}</Cell>
            <Cell $r $b>{row[5]}</Cell>
          </Row>
        ))}
        {summaries.map((s) => (
          <Row key={s.n} $h={26}>
            <RowHead>{s.n}</RowHead>
            <Cell $r />
            <Cell $bg={rose} $left $r $b>{s.name}</Cell>
            {s.v.map((v) => <Cell key={v} $r $b>{v}</Cell>)}
            <Cell $bg={s.n === 19 ? '#00b0f0' : undefined} $thin={s.n === 20} $r $b>{s.total}</Cell>
            <Cell $thin $r $b>-</Cell>
            <Cell /><Cell $r />
            <Cell $bg="#92d050" $r $b>{s.key}</Cell>
            <Cell $left $indent={14} $r $b>{s.out}</Cell>
          </Row>
        ))}
      </tbody>
    </Grid>
  );
}

export default function App() {
  return (
    <Window>
      <Global />
      <Header>
        <Doodles width="360" height="61" viewBox="0 0 360 61" fill="none" stroke="#1c603b" opacity=".6">
          {[[12, 16, 0.6], [45, 2, 1.1], [98, 8, 1.3], [145, 0, 0.9], [20, 34, 0.5], [55, 32, 0.8], [110, 30, 0.8], [165, 22, 0.6], [250, 26, 0.8], [275, 2, 0.7], [300, 20, 0.8], [328, 4, 0.5]].map(([x, y, s]) => (
            <path key={`${x}-${y}`} d={paperPlane} transform={`translate(${x} ${y}) scale(${s})`} />
          ))}
          <path d="M205 0l-9 26 11 18 12-18-10-26M196 26h23M207 0v44M180 26l-4 18 10 6zM232 26l-4 14 10 8z" />
        </Doodles>
        <TitleBar>
          <QuickAccess>
            <Tool $w={22} aria-label="Save"><svg width="14" height="14" viewBox="0 0 14 14" fill="none" stroke="#fff" strokeWidth="1.500"><path d="M1 1h12v12H1zM3 1v5.500h8V1" /><path d="M4.500 13V9.500h5V13M6.500 10v3" /></svg></Tool>
            <Tool $w={28} aria-label="Undo"><svg width="14" height="13" viewBox="0 0 14 13" fill="none" stroke="#fff" strokeWidth="2"><path d="M5 1L1.500 4.500 5 8M2 4.500h6c6 0 6 7 0 7.500" /></svg></Tool>
            <Caret color="#fff" />
            <Tool $w={28} aria-label="Redo"><svg width="14" height="13" viewBox="0 0 14 13" fill="none" stroke="#4b8e69" strokeWidth="1.600"><path d="M9 1l3.500 3.500L9 8M12 4.500H6c-6 0-6 7 0 7.500" /></svg></Tool>
            <Caret color="#4b8e69" />
            <Tool $w={28} aria-label="Customize"><svg width="6" height="6" viewBox="0 0 6 6"><path d="M.5 0h5v1h-5zM0 2.500h6L3 6z" fill="#fff" /></svg></Tool>
          </QuickAccess>
          <span>RBD 09 sqrt final(243).xlsx&nbsp; -&nbsp; Excel</span>
          <WindowControls>
            <span>Navnath Khade</span>
            <Tool $w={56} aria-label="Ribbon display"><svg width="13" height="11" viewBox="0 0 13 11" fill="none" stroke="#fff"><path d="M.5.500h12v10H.500zM0 2.500h13M6.500 9V4.500M4.500 6.500l2-2 2 2" /></svg></Tool>
            <Tool $w={36} aria-label="Minimize"><svg width="10" height="1" viewBox="0 0 10 1"><path d="M0 0h10v1H0z" fill="#fff" /></svg></Tool>
            <Tool $w={50} aria-label="Restore"><svg width="11" height="11" viewBox="0 0 11 11" fill="none" stroke="#fff"><path d="M.5 2.500h7v7h-7zM2.500 2V.500h7v7H8" /></svg></Tool>
            <Tool $w={34} aria-label="Close"><svg width="11" height="11" viewBox="0 0 11 11" fill="none" stroke="#fff"><path d="M.5.500l10 10M10.500.500l-10 10" /></svg></Tool>
          </WindowControls>
        </TitleBar>
        <TabBar>
          <Tab $first>File</Tab>
          <Tab $active>Home</Tab>
          {['Insert', 'Draw', 'Page Layout', 'Formulas', 'Data', 'Review', 'View', 'Developer', 'ACROBAT', 'XLSTAT'].map((t) => <Tab key={t}>{t}</Tab>)}
          <TellMe>
            <svg width="10" height="14" viewBox="0 0 10 14" fill="none" stroke="#e5f3ea" strokeWidth="1.200"><path d="M3 9.500C3 8 1 7 1 4.500a4 4 0 018 0C9 7 7 8 7 9.500zM3.500 11.500h3M4 13.200h2" /></svg>
            <input aria-label="Tell me" placeholder="Tell me what you want to do" />
          </TellMe>
          <Share>
            <svg width="14" height="15" viewBox="0 0 14 15" fill="none" stroke="#fff" strokeWidth="1.100"><circle cx="7.500" cy="4.500" r="3.800" /><path d="M5.500 8C3 9 1.200 11 .600 14M10.500 8.500v6M7.500 11.500h6" /></svg>
            Share
          </Share>
          <Tool $w={32} $h={28} aria-label="Feedback">
            <svg width="16" height="16" viewBox="0 0 16 16"><circle cx="8" cy="8" r="7.700" fill="#fcd116" /><path d="M4.500 5h1.500v2.500H4.500zM10 5h1.500v2.500H10z" fill="#5c4300" /><path d="M3.500 9.500c1.500 4 7.500 4 9 0" stroke="#5c4300" fill="none" /></svg>
          </Tool>
        </TabBar>
      </Header>

      <RibbonBar />

      <FormulaBar>
        <Field $w={95}><input aria-label="Name box" defaultValue="C29" /><Caret /></Field>
        <Dots $m={14} />
        <Field $w={103}>
          <Tool $w={24} aria-label="Cancel"><svg width="10" height="10" viewBox="0 0 10 10"><path d="M.5.500l9 9M9.500.500l-9 9" stroke="#bbb" strokeWidth="1.500" /></svg></Tool>
          <Tool $w={44} aria-label="Enter"><svg width="12" height="10" viewBox="0 0 12 10"><path d="M1 5l3 4 7-8" stroke="#bbb" strokeWidth="1.800" fill="none" /></svg></Tool>
          <Tool $w={24}><Letter $size={14} $kind="i">f</Letter><Letter $size={10} $kind="i">x</Letter></Tool>
        </Field>
        <Rule $m={1} $h={1} />
        <Field $grow>
          <input aria-label="Formula" defaultValue="=SUM(C7:F18)^2/COUNT(C7:F18)" />
          <svg width="7" height="5" viewBox="0 0 7 5"><path d="M.5.700l3 3 3-3" stroke="#555" strokeWidth="1.500" fill="none" /></svg>
        </Field>
      </FormulaBar>

      <SheetArea>
        <Viewport><Sheet /></Viewport>
        <VScroll>
          <ScrollButton aria-label="Scroll up"><svg width="5" height="3" viewBox="0 0 5 3"><path d="M0 3L2.500 0 5 3z" fill="#666" /></svg></ScrollButton>
          <VTrack><div /></VTrack>
          <ScrollButton aria-label="Scroll down"><svg width="5" height="3" viewBox="0 0 5 3"><path d="M0 0l2.500 3L5 0z" fill="#666" /></svg></ScrollButton>
        </VScroll>
      </SheetArea>

      <SheetTabs>
        <Tool $w={54} $h={24} aria-label="Previous sheet"><svg width="4" height="6" viewBox="0 0 4 6"><path d="M4 0v6L0 3z" fill="#bbb" /></svg></Tool>
        <Tool $w={8} $h={24} aria-label="Next sheet"><svg width="4" height="6" viewBox="0 0 4 6"><path d="M0 0v6l4-3z" fill="#bbb" /></svg></Tool>
        <SheetTab $w={32} aria-hidden="true" />
        <SheetTab $w={61}>Sheet1</SheetTab>
        <SheetTab $w={47}>RBD</SheetTab>
        <SheetTab $w={54} $active>RBD2</SheetTab>
        <SheetTab $w={209}>Square root data transformation</SheetTab>
        <Tool $w={76} $h={24} aria-label="New sheet"><svg width="16" height="16" viewBox="0 0 16 16" fill="none" stroke="#777"><circle cx="8" cy="8" r="7" /><path d="M4 8h8M8 4v8" strokeWidth="1.500" /></svg></Tool>
        <Push />
        <Line><Tool $w={32} $h={24} aria-label="Resize tabs"><Dots $m={0} /></Tool></Line>
        <HScroll>
          <ScrollButton aria-label="Scroll left"><svg width="4" height="6" viewBox="0 0 4 6"><path d="M4 0v6L0 3z" fill="#666" /></svg></ScrollButton>
          <HTrack><div /></HTrack>
          <ScrollButton aria-label="Scroll right"><svg width="4" height="6" viewBox="0 0 4 6"><path d="M0 0v6l4-3z" fill="#666" /></svg></ScrollButton>
        </HScroll>
      </SheetTabs>

      <Status>
        <span>Ready</span>
        <Tool $w={46} $h={18} aria-label="Record macro"><svg width="13" height="13" viewBox="0 0 13 13"><circle cx="3" cy="3" r="3" fill="#555" /><path d="M7 1h6v3H7zM1 6h12v7H1z" fill="#666" /><path d="M1 8h12M1 10.500h12M4 6v7M7 6v7M10 6v7" stroke="#f1f1f1" /></svg></Tool>
        <Push />
        <Tool $w={36} $h={19} $on aria-label="Normal view"><svg width="13" height="12" viewBox="0 0 13 12" fill="none" stroke="#666"><path d="M.5.500h12v11H.500zM4.500 0v12M8.500 0v12M0 4h13M0 8h13" /></svg></Tool>
        <Tool $w={36} $h={19} aria-label="Page layout view"><svg width="13" height="12" viewBox="0 0 13 12" fill="none" stroke="#666"><path d="M.5.500h12v11H.500zM3.500 2.500h6v7h-6zM5 4.500h3M5 6h3M5 7.500h3" /></svg></Tool>
        <Tool $w={36} $h={19} aria-label="Page break view"><svg width="13" height="12" viewBox="0 0 13 12" fill="none" stroke="#666"><path d="M.5.500h12v11H.500zM4.500 0v6.500h5V0M7 0v6" /></svg></Tool>
        <Tool $w={14} $h={18} aria-label="Zoom out"><svg width="6" height="2" viewBox="0 0 6 2"><path d="M0 0h6v2H0z" fill="#555" /></svg></Tool>
        <Zoom type="range" min={0} max={100} defaultValue={50} aria-label="Zoom" />
        <Tool $w={14} $h={18} aria-label="Zoom in"><svg width="8" height="8" viewBox="0 0 8 8"><path d="M3 0h2v3h3v2H5v3H3V5H0V3h3z" fill="#555" /></svg></Tool>
        <ZoomValue>100%</ZoomValue>
      </Status>

      <Taskbar>
        <Tool $w={45} $h={38} aria-label="Start"><Logo /></Tool>
        <Search>
          <svg width="20" height="20" viewBox="0 0 20 20"><circle cx="10" cy="10" r="8" fill="none" stroke="#f4f4f4" strokeWidth="2.600" /></svg>
          <input placeholder="Type here to search" aria-label="Search" />
          <svg width="10" height="16" viewBox="0 0 10 16" fill="none" stroke="#aaa"><rect x="3" y=".5" width="4" height="9" rx="2" /><path d="M.5 7v2.500c0 3 9 3 9 0V7M5 12v3M2.500 15.500h5" /></svg>
        </Search>
        <App46 aria-label="Task view"><svg width="19" height="14" viewBox="0 0 19 14" fill="none" stroke="#f4f4f4"><path d="M4.500.500h10v13h-10zM3 2.500H.500v9H3M16 2.500h2.500v9H16" /></svg></App46>
        <App46 $state="open" aria-label="Recorder"><svg width="20" height="18" viewBox="0 0 20 18"><path d="M0 2l8-1.500L20 1v16H0z" fill="#ececec" /><path d="M0 2l20-1v3H0z" fill="#fff" /><circle cx="8" cy="10" r="4" fill="#d8733c" /><circle cx="9.500" cy="8.500" r="1.500" fill="#fbe3d3" /><path d="M14 6h3v9h-3z" fill="#d8733c" /></svg></App46>
        <App46 aria-label="Presenter"><svg width="23" height="23" viewBox="0 0 23 23"><path d="M0 0h23v23H0z" fill="#d83b01" /><path d="M5 6.500l9-1.500v13l-9-1.500z" fill="#fff" /><path d="M8 8.500v6h3.500" stroke="#d83b01" strokeWidth="1.600" fill="none" /><path d="M14.500 7.500c5 .5 5 8 0 8.500M16 8l-1.500 4 3 2" stroke="#fff" strokeWidth="1.600" fill="none" /></svg></App46>
        <App46 aria-label="Edge"><FaEdgeLegacy size={21} color="#0f7ad8" /></App46>
        <App46 aria-label="File Explorer"><svg width="20" height="18" viewBox="0 0 20 18"><path d="M0 0h7l1 2h12v14H0z" fill="#f4d77b" /><path d="M0 4h20v12H0z" fill="#fbe49a" /><path d="M3.500 17V9.500h13V17h-3.500v-4H7v4z" fill="#4fb8dc" /></svg></App46>
        <App46 aria-label="Store"><svg width="21" height="22" viewBox="0 0 21 22"><path d="M6 7c0-7 7-8 7-1M9 5c2-4 6-2 6 2" fill="none" stroke="#fff" strokeWidth="1.200" /><path d="M0 8l20-2v16L2 20z" fill="#fff" /><path d="M5 10.500l4.500-.4v3.600H5zM10.500 10l5.500-.5v4.200h-5.500zM5 14.700h4.500v3.500L5 17.800zM10.500 14.700H16V19l-5.500-.7z" fill="#101010" /></svg></App46>
        <App46 aria-label="Firefox"><svg width="22" height="22" viewBox="0 0 22 22"><circle cx="11" cy="11" r="10.500" fill="#e8631b" /><circle cx="12" cy="9.500" r="7.500" fill="#2b6fb5" /><path d="M7 2c3-1.500 7-1 9 1-2 1-3 3-5 3S7 4 7 2z" fill="#6fb8e0" /><path d="M1 6c0-2 1-3.500 2-4.500C4 4 7 5 9 5.500 8 7 8 8 10 9c-3 1-1 5 3 4 3-.5 4-2 4.500-4 1.500 6-3 10-8 10C3.500 19 0 13 1 6z" fill="#f08a1c" /><path d="M19 4c3 5 3 12-3 16 3-5 4-10 3-16z" fill="#f9c22b" /></svg></App46>
        <App46 $state="open" aria-label="Groove Music"><svg width="24" height="24" viewBox="0 0 24 24" fill="none" stroke="#fff"><path d="M17.500 3.500a10.200 10.200 0 103 3" strokeWidth="2.600" /><circle cx="12" cy="12.500" r="4" strokeWidth="3" /><path d="M15.500 12V3.500l4.500 3" strokeWidth="2" /></svg></App46>
        <App46 $state="active" aria-label="Excel"><svg width="20" height="20" viewBox="0 0 20 20"><path d="M11 3h9v14h-9z" fill="#e9f3ec" /><path d="M12 5h3M12 7.500h3M12 10h3M12 12.500h3M12 15h3M16 5h3M16 7.500h3M16 10h3M16 12.500h3M16 15h3" stroke="#217346" /><path d="M0 2l12-2v20L0 18z" fill="#1d7044" /><path d="M3.500 6.500l5 7M8.500 6.500l-5 7" stroke="#fff" strokeWidth="1.800" /></svg></App46>
        <Tray>
          <Battery><b>22%</b><i /></Battery>
          <Tool $w={24} aria-label="Hidden icons"><svg width="11" height="7" viewBox="0 0 11 7"><path d="M.700 6.300L5.500 1.200l4.800 5.100" stroke="#eee" strokeWidth="1.400" fill="none" /></svg></Tool>
          <Tool $w={22} aria-label="Power"><svg width="14" height="9" viewBox="0 0 14 9" fill="none" stroke="#eee" strokeWidth="1.200"><path d="M.700.700h11.500v7.600H.700z" /><path d="M13.300 3v3M3 2.500v4" /></svg></Tool>
          <Tool $w={22} aria-label="Network"><svg width="15" height="13" viewBox="0 0 15 13" fill="none" stroke="#888"><path d="M4 7c1-3 5-6 10-6M7 9c1-2 4-4 7-4M10 11c1-1.500 2-2 4-2" /><circle cx="4.500" cy="8.500" r="4.200" fill="#d92b38" stroke="none" /><path d="M3 7l3 3M6 7l-3 3" stroke="#fff" /></svg></Tool>
          <Tool $w={20} aria-label="Volume"><svg width="15" height="12" viewBox="0 0 15 12" fill="none" stroke="#eee"><path d="M.5 4v4h2l3 3V1l-3 3zM7.500 4c1 1 1 3 0 4M9.500 2.500c2 2 2 5 0 7" /><path d="M11.700 1c3 3 3 7 0 10" stroke="#888" /></svg></Tool>
          <Tool $w={38}>ENG</Tool>
          <Clock>01:07 AM<br />02-05-2017</Clock>
          <Tool $w={50} aria-label="Notifications"><svg width="16" height="15" viewBox="0 0 16 15"><path d="M.7.700h14.600v10.500h-4.500L8 14l-2.500-2.800H.700z" fill="none" stroke="#eee" strokeWidth="1.300" /></svg></Tool>
        </Tray>
      </Taskbar>
    </Window>
  );
}
